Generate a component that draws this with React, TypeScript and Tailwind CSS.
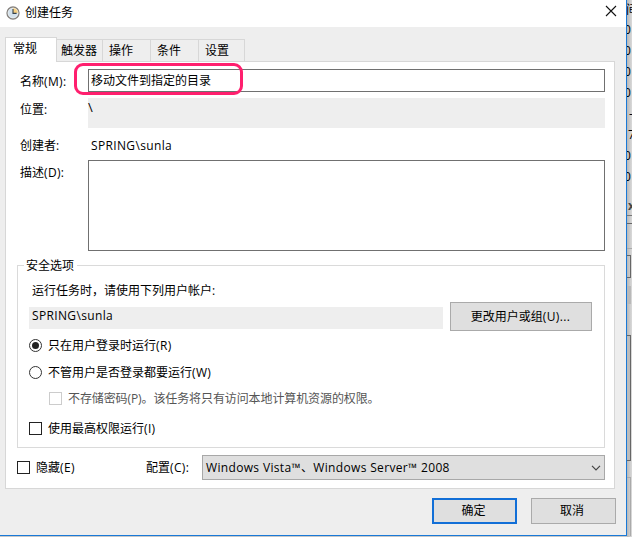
import React from "react";

const font = "font-['Open_Sans','Noto_Sans_CJK_SC',sans-serif]";

function Label({ children, className = "" }: { children: React.ReactNode; className?: string }) {
  return <span className={`block whitespace-nowrap text-[12px] leading-[18px] ${className}`}>{children}</span>;
}

function Key({ children }: { children: React.ReactNode }) {
  return <span className="tracking-[0.35px]">{children}</span>;
}

function Check({ disabled = false }: { disabled?: boolean }) {
  return <span className={`block size-[13px] shrink-0 border bg-white ${disabled ? "border-[#cccccc]" : "border-[#222222]"}`} />;
}

function Radio({ checked = false }: { checked?: boolean }) {
  return (
    <span className="flex size-[13px] shrink-0 items-center justify-center rounded-full border border-[#333333] bg-white">
      {checked && <span className="size-[7px] rounded-full bg-[#222222]" />}
    </span>
  );
}

function Clock() {
  return (
    <svg width="14" height="14" viewBox="0 0 14 14" fill="none">
      <circle cx="7" cy="7" r="6" fill="#d3e1ec" stroke="#85817d" strokeWidth="1.3" />
      <path d="M7 7V1.8A5.2 5.2 0 0 1 12.2 7Z" fill="#f6cf80" />
      <circle cx="7" cy="7" r="4.9" stroke="#f5f5f2" strokeWidth=".5" />
      <path d="M7 3v4.4h3.6" stroke="#34424d" strokeWidth="1.1" />
    </svg>
  );
}

const tabs = [
  { name: "触发器", width: "w-[46px] pl-[4px]" },
  { name: "操作", width: "w-[48px] pl-[6px]" },
  { name: "条件", width: "w-[48px] pl-[6px]" },
  { name: "设置", width: "w-[46px] pl-[6px]" },
];

const behind = [
  { text: "间", cls: "h-[20px] -ml-px -mt-[2px]" },
  { text: "0", cls: "h-[21px] -ml-[3px]" },
  { text: "0", cls: "h-[21px] -ml-[3px]" },
  { text: "0", cls: "h-[21px] -ml-[3px]" },
  { text: "0", cls: "h-[21px] -ml-[3px]" },
  { text: "-", cls: "h-[21px] ml-[2px]" },
  { text: "7", cls: "h-[21px] ml-[1px]" },
  { text: "0", cls: "h-[21px] -ml-[3px]" },
  { text: "0", cls: "h-[19px] -ml-[3px]" },
];

function WindowBehind() {
  return (
    <div className="flex h-[537px] w-[5px] flex-col overflow-hidden bg-linear-to-r from-[#b8b8b8] to-[#dadada]">
      {behind.map((b, i) => (
        <Label key={i} className={`shrink-0 translate-y-[3px] ${b.cls}`}>{b.text}</Label>
      ))}
      <div className="mt-[12px] h-[20px] shrink-0 border-b border-[#777777]">
        <Label className="ml-[1px] pt-px font-bold text-[#444444]">x</Label>
      </div>
      <div className="mt-[7px] h-[26px] shrink-0 border-y border-t-[#666666] border-b-[#aaaaaa]" />
      <div className="mt-[6px] h-[23px] w-[4px] shrink-0 border border-l-0 border-[#666666]" />
      <div className="mt-[8px] h-[18px] w-[4px] shrink-0 bg-[#b9b9b9]" />
      <div className="mt-[31px] h-[126px] w-[4px] shrink-0 border border-l-0 border-[#666666] bg-[#bcbcbc]" />
      <div className="mt-[16px] h-[59px] w-[4px] shrink-0 border border-b-0 border-l-0 border-[#aaaaaa]" />
    </div>
  );
}

export default function App() {
  return (
    <div className={`flex h-[537px] w-[632px] overflow-hidden bg-[#c8c8c8] text-black ${font}`}>
      <div className="h-[536px] w-[627px] shrink-0 border-r border-b border-[#1979d7] bg-[#eeeeee]">
        <header className="flex h-[27px] justify-between bg-white">
          <div className="flex pl-[6px]">
            <div className="pt-[6px]"><Clock /></div>
            <Label className="ml-[5px] pt-[4px]">创建任务</Label>
          </div>
          <svg className="mt-[5px] mr-[9px]" width="12" height="12" viewBox="0 0 12 12" stroke="#111" strokeWidth="1.1">
            <path d="M1 1l10 10M11 1L1 11" />
          </svg>
        </header>

        <nav className="mt-[10px] ml-[5px] flex h-[25px] items-end">
          <div className="z-10 h-[25px] w-[52px] border border-b-0 border-[#d7d7d7] bg-white pl-[7px]">
            <Label className="pt-[2px]">常规</Label>
          </div>
          {tabs.map((t) => (
            <div key={t.name} className={`h-[23px] border-t border-r border-[#d7d7d7] ${t.width}`}>
              <Label className="pt-[2px]">{t.name}</Label>
            </div>
          ))}
        </nav>

        <main className="-mt-px ml-[5px] h-[428px] w-[610px] border border-[#d7d7d7] bg-white">
          <div className="relative mt-[7px] flex h-[23px]">
            <Label className="w-[82px] pt-[4px] pl-[14px]">名称<Key>(M):</Key></Label>
            <div className="w-[517px] border border-[#707070] pl-[2px]">
              <Label className="pt-[2px]">移动文件到指定的目录</Label>
            </div>
            <div className="absolute top-[-6px] left-[68px] h-[32px] w-[169px] rounded-[9px] border-[3px] border-[#ff1f6e]" />
          </div>
          <div className="mt-[6px] flex h-[30px]">
            <Label className="w-[82px] pt-[3px] pl-[14px]">位置:</Label>
            <div className="w-[517px] bg-[#eeeeee]"><Label className="text-[13px]">\</Label></div>
          </div>
          <div className="mt-[9px] flex h-[18px]">
            <Label className="w-[82px] pl-[14px]">创建者:</Label>
            <Label className="pl-[3px]"><Key>SPRING\sunla</Key></Label>
          </div>
          <div className="mt-[5px] flex h-[91px]">
            <Label className="w-[82px] pt-[4px] pl-[14px]">描述<Key>(D):</Key></Label>
            <div className="w-[517px] border border-[#707070] bg-white" />
          </div>

          <section className="mt-[14px] ml-[11px] h-[183px] w-[588px] border border-[#dadada]">
            <Label className="-mt-[9px] ml-[6px] h-[18px] w-[53px] bg-white pl-[2px]">安全选项</Label>
            <Label className="mt-[7px] ml-[14px]">运行任务时，请使用下列用户帐户:</Label>
            <div className="mt-[2px] ml-[11px] flex h-[29px]">
              <div className="mt-[5px] h-[22px] w-[414px] bg-[#eeeeee] pl-[3px]"><Label><Key>SPRING\sunla</Key></Label></div>
              <button className="ml-[7px] w-[142px] border border-[#aaaaaa] bg-[#dfdfdf]"><Label className="-ml-px">更改用户或组<Key>(U)...</Key></Label></button>
            </div>
            <div className="mt-[5px] ml-[11px] flex h-[19px] items-center gap-[6px]"><Radio checked /><Label className="pt-px">只在用户登录时运行<Key>(R)</Key></Label></div>
            <div className="mt-[8px] ml-[11px] flex h-[19px] items-center gap-[6px]"><Radio /><Label className="pt-px">不管用户是否登录都要运行<Key>(W)</Key></Label></div>
            <div className="mt-[7px] ml-[31px] flex h-[19px] items-center gap-[6px]"><Check disabled /><Label className="pt-px tracking-[-0.1px] text-[#555555]">不存储密码(P)。该任务将只有访问本地计算机资源的权限。</Label></div>
            <div className="mt-[11px] ml-[11px] flex h-[19px] items-center gap-[6px]"><Check /><Label className="pt-px">使用最高权限运行<Key>(I)</Key></Label></div>
          </section>

          <div className="mt-[7px] ml-[11px] flex h-[25px] items-center">
            <Check />
            <Label className="ml-[6px] w-[110px]">隐藏<Key>(E)</Key></Label>
            <Label className="w-[56px] pt-px">配置<Key>(C):</Key></Label>
            <div className="flex h-[25px] w-[403px] items-center justify-between border border-[#a8a8a8] bg-[#dfdfdf] pr-[3px] pl-[3px]">
              <Label className="tracking-[0.34px]">Windows Vista™、Windows Server™ 2008</Label>
              <svg width="10" height="6" viewBox="0 0 10 6" fill="none" stroke="#444" strokeWidth="1.2"><path d="M1 .8l4 4 4-4" /></svg>
            </div>
          </div>
        </main>

        <footer className="mt-[9px] ml-[432px] flex h-[26px] gap-[14px]">
          <button className="w-[85px] border-2 border-[#126fd7] bg-[#dfdfdf]"><Label className="-ml-[2px]">确定</Label></button>
          <button className="w-[85px] border border-[#aaaaaa] bg-[#dfdfdf]"><Label className="-ml-[3px]">取消</Label></button>
        </footer>
      </div>
      <WindowBehind />
    </div>
  );
}
